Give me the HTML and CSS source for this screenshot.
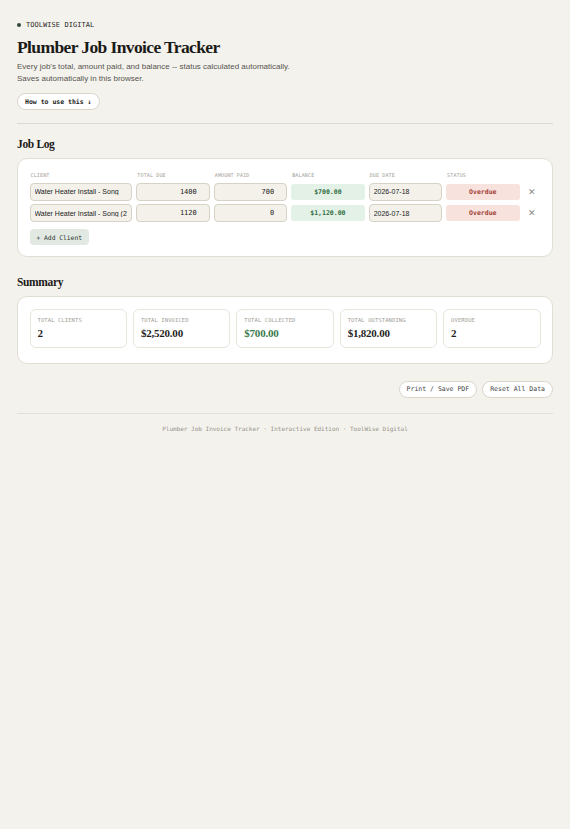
FILE: index.html
```html
<!DOCTYPE html>
<html lang="en">
<head>
<meta charset="utf-8">
<title>Plumber Job Invoice Tracker</title>
<link rel="stylesheet" href="styles.css">
</head>
<body>
<div class="page">
  <div class="eyebrow"><span class="dot"></span>TOOLWISE DIGITAL</div>
  <h1 class="title">Plumber Job Invoice Tracker</h1>
  <p class="lede">Every job's total, amount paid, and balance -- status calculated automatically.<br>Saves automatically in this browser.</p>
  <button class="pill pill-strong">How to use this ↓</button>
  <hr class="rule">

  <h2 class="section">Job Log</h2>
  <div class="card">
    <div class="grid head">
      <div class="lbl">Client</div>
      <div class="lbl">Total Due</div>
      <div class="lbl">Amount Paid</div>
      <div class="lbl">Balance</div>
      <div class="lbl">Due Date</div>
      <div class="lbl">Status</div>
      <div></div>
    </div>
    <div class="grid row">
      <input class="field" type="text" value="Water Heater Install - Song">
      <input class="field num" type="text" value="1400">
      <input class="field num" type="text" value="700">
      <div class="chip bal">$700.00</div>
      <input class="field" type="text" value="2026-07-18">
      <div class="chip over">Overdue</div>
      <div class="del">✕</div>
    </div>
    <div class="grid row">
      <input class="field" type="text" value="Water Heater Install - Song (2)">
      <input class="field num" type="text" value="1120">
      <input class="field num" type="text" value="0">
      <div class="chip bal">$1,120.00</div>
      <input class="field" type="text" value="2026-07-18">
      <div class="chip over">Overdue</div>
      <div class="del">✕</div>
    </div>
    <button class="add">+ Add Client</button>
  </div>

  <h2 class="section section-2">Summary</h2>
  <div class="card sumcard">
    <div class="stats">
      <div class="stat"><div class="slbl">Total Clients</div><div class="sval">2</div></div>
      <div class="stat"><div class="slbl">Total Invoiced</div><div class="sval">$2,520.00</div></div>
      <div class="stat"><div class="slbl">Total Collected</div><div class="sval green">$700.00</div></div>
      <div class="stat"><div class="slbl">Total Outstanding</div><div class="sval">$1,820.00</div></div>
      <div class="stat"><div class="slbl">Overdue</div><div class="sval">2</div></div>
    </div>
  </div>

  <div class="actions">
    <button class="pill">Print / Save PDF</button>
    <button class="pill">Reset All Data</button>
  </div>

  <footer class="foot">Plumber Job Invoice Tracker · Interactive Edition · ToolWise Digital</footer>
</div>
</body>
</html>
```
FILE: styles.css
```css
* { box-sizing: border-box; }
html, body { margin: 0; padding: 0; }
body {
  background: #f4f2ec;
  color: #1c1c1a;
  font-family: "Liberation Sans", Arial, sans-serif;
}
.page {
  padding: 20px 17px 30px;
}
.eyebrow {
  display: flex;
  align-items: center;
  gap: 5px;
  font-family: "DejaVu Sans Mono", monospace;
  font-size: 7px;
  letter-spacing: 0.05px;
  line-height: 10px;
  color: #2c2c2a;
}
.dot {
  width: 4px;
  height: 4px;
  border-radius: 50%;
  background: #2f4a38;
}
.title {
  margin: 7px 0 0;
  font-family: "Liberation Serif", "Times New Roman", serif;
  font-weight: 700;
  font-size: 17.5px;
  line-height: 20px;
  letter-spacing: -0.035em;
  color: #1a1a18;
}
.lede {
  margin: 4px 0 0;
  font-size: 8px;
  line-height: 12px;
  color: #555450;
}
.pill {
  display: inline-flex;
  align-items: center;
  height: 17px;
  padding: 0 7px;
  border: 1px solid #d9d5cb;
  border-radius: 9px;
  background: #fff;
  font-family: "DejaVu Sans Mono", monospace;
  font-size: 6.5px;
  color: #444;
  cursor: pointer;
}
.pill-strong {
  margin-top: 8px;
  font-weight: 700;
  color: #1c1c1a;
}
.rule {
  margin: 13px 0 0;
  border: 0;
  border-top: 1px solid #dedad0;
}
.section {
  margin: 13px 0 0;
  font-family: "Liberation Serif", "Times New Roman", serif;
  font-weight: 700;
  font-size: 11.5px;
  line-height: 14px;
  letter-spacing: -0.03em;
  color: #1a1a18;
}
.section-2 { margin-top: 18px; }
.card {
  margin-top: 7px;
  background: #fff;
  border: 1.5px solid #e1ded3;
  border-radius: 10px;
  padding: 11.5px 11.5px 10.5px;
}
.grid {
  display: grid;
  grid-template-columns: 1.4fr repeat(5, 1fr) 17px;
  gap: 4px;
  align-items: center;
}
.head { margin-bottom: 4px; }
.lbl {
  padding-left: 1px;
  font-family: "DejaVu Sans Mono", monospace;
  font-size: 5px;
  line-height: 8px;
  letter-spacing: 0.15px;
  text-transform: uppercase;
  color: #a19e96;
}
.row { margin-bottom: 3.5px; }
.field {
  width: 100%;
  min-width: 0;
  height: 18px;
  margin: 0;
  padding: 0 4px;
  border: 1px solid #d6d2c6;
  border-radius: 4px;
  background: #f3f1ea;
  font-family: "Liberation Sans", Arial, sans-serif;
  font-size: 7px;
  color: #222;
  outline: none;
}
.num {
  text-align: right;
  padding-right: 12px;
  font-family: "DejaVu Sans Mono", monospace;
}
.chip {
  height: 16px;
  display: flex;
  align-items: center;
  justify-content: center;
  border-radius: 3px;
  font-family: "DejaVu Sans Mono", monospace;
  font-weight: 700;
  font-size: 6.5px;
}
.bal { background: #e3f1e6; color: #2f6e42; }
.over { background: #f7e2dd; color: #a3423a; }
.del {
  text-align: center;
  font-size: 9px;
  color: #8a8884;
}
.add {
  margin-top: 3.5px;
  height: 16px;
  padding: 0 7px;
  border: 0;
  border-radius: 4px;
  background: #e2e9e3;
  font-family: "DejaVu Sans Mono", monospace;
  font-size: 6.3px;
  color: #28362c;
}
.sumcard { padding: 12px 11.5px 15px; }
.stats {
  display: grid;
  grid-template-columns: repeat(5, 1fr);
  gap: 6px;
}
.stat {
  border: 1px solid #e8e5dc;
  border-radius: 6px;
  padding: 7.5px 7px 6.5px;
}
.slbl {
  font-family: "DejaVu Sans Mono", monospace;
  font-size: 5.5px;
  line-height: 7px;
  letter-spacing: 0.1px;
  text-transform: uppercase;
  color: #a09d95;
}
.sval {
  margin-top: 2px;
  font-family: "Liberation Serif", "Times New Roman", serif;
  font-weight: 700;
  font-size: 11px;
  line-height: 14px;
  letter-spacing: -0.02em;
  color: #1f1f1d;
}
.green { color: #3b7a4c; }
.actions {
  display: flex;
  justify-content: flex-end;
  gap: 5px;
  margin-top: 17px;
}
.foot {
  margin-top: 15px;
  border-top: 1px solid #e2dfd5;
  padding-top: 10px;
  text-align: center;
  font-family: "DejaVu Sans Mono", monospace;
  font-size: 6px;
  line-height: 9px;
  color: #97948d;
}
```
